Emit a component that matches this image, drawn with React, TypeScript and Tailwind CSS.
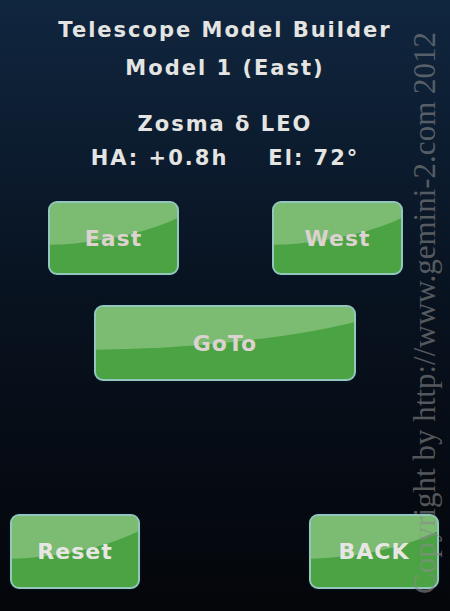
function Btn({ label, className, dim }: { label: string; className: string; dim?: boolean }) {
  return (
    <button
      className={
        "relative overflow-hidden rounded-[9px] border-2 border-[#93c6bd] bg-[#4ba343] shadow-[0_0_3px_#0a1a2a] " +
        className
      }
    >
      <span className="absolute left-[-160%] top-[-180%] h-[240%] w-[300%] rounded-[50%] bg-[#b5dcae]/45" />
      <span
        className={
          "relative text-[22px] font-bold tracking-[1px] " + (dim ? "text-[#dcd2cf]" : "text-[#e8e6e4]")
        }
      >
        {label}
      </span>
    </button>
  );
}

export default function App() {
  return (
    <div
      className="relative h-[611px] w-[450px] overflow-hidden bg-gradient-to-b from-[#10263f] via-[#08121f] to-[#04060a] text-[#e4e4e2]"
      style={{ fontFamily: '"DejaVu Sans", "Liberation Sans", sans-serif' }}
    >
      <div className="flex flex-col items-center pt-[15px] text-[21px] font-bold tracking-[2px]">
        <div className="h-[30px] leading-[30px]">Telescope Model Builder</div>
        <div className="mt-[8px] h-[30px] leading-[30px]">Model 1 (East)</div>
        <div className="mt-[26px] h-[30px] leading-[30px]">Zosma δ LEO</div>
        <div className="mt-[4px] flex h-[30px] gap-[40px] leading-[30px]">
          <span>HA: +0.8h</span>
          <span>El: 72°</span>
        </div>
      </div>

      <div className="mt-[28px] flex justify-between pl-[48px] pr-[47px]">
        <Btn label="East" dim className="h-[74px] w-[131px]" />
        <Btn label="West" dim className="h-[74px] w-[131px]" />
      </div>

      <div className="mt-[30px] pl-[94px]">
        <Btn label="GoTo" dim className="h-[76px] w-[262px]" />
      </div>

      <div className="mt-[133px] flex justify-between pl-[10px] pr-[11px]">
        <Btn label="Reset" className="h-[75px] w-[130px]" />
        <Btn label="BACK" className="h-[75px] w-[130px]" />
      </div>

      <div
        className="pointer-events-none absolute left-[425px] top-[313px] -translate-x-1/2 -translate-y-1/2 -rotate-90 whitespace-nowrap text-[31px] text-[#8a8a8a]/60"
        style={{ fontFamily: '"Liberation Serif", serif' }}
      >
        Copyright by http://www.gemini-2.com 2012
      </div>
    </div>
  );
}
